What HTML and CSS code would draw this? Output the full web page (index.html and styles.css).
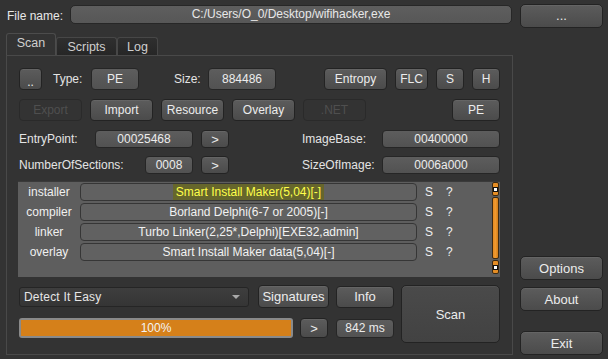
FILE: index.html
```html
<!DOCTYPE html>
<html lang="en">
<head>
    <meta charset="UTF-8">
    <title>Detect It Easy</title>
    <link rel="stylesheet" href="styles.css">
</head>
<body>
    <div id="window">
        <div class="file-bar">
            <span class="file-label">File name:</span>
            <div class="file-input">C:/Users/O_0/Desktop/wifihacker,exe</div>
            <button class="btn side-btn browse-btn">...</button>
        </div>
        <div class="main">
            <div class="left">
                <div class="tabs">
                    <div class="tab active">Scan</div>
                    <div class="tab tab-scripts">Scripts</div>
                    <div class="tab tab-log">Log</div>
                </div>
                <div class="panel">
                    <div class="row row-tall">
                        <button class="btn dots-btn">..</button>
                        <span class="label type-label">Type:</span>
                        <div class="field type-field">PE</div>
                        <span class="label size-label">Size:</span>
                        <div class="field size-field">884486</div>
                        <button class="btn entropy-btn push-right">Entropy</button>
                        <button class="btn flc-btn">FLC</button>
                        <button class="btn small-btn">S</button>
                        <button class="btn small-btn">H</button>
                    </div>
                    <div class="row row-tall">
                        <button class="btn wide-btn" disabled>Export</button>
                        <button class="btn wide-btn">Import</button>
                        <button class="btn wide-btn">Resource</button>
                        <button class="btn wide-btn">Overlay</button>
                        <button class="btn wide-btn" disabled>.NET</button>
                        <button class="btn pe-btn push-right">PE</button>
                    </div>
                    <div class="info-row">
                        <div class="info-left">
                            <span class="label">EntryPoint:</span>
                            <div class="field ep-field">00025468</div>
                            <button class="btn arrow-btn">&gt;</button>
                        </div>
                        <div class="info-right">
                            <span class="label">ImageBase:</span>
                            <div class="field wide-field">00400000</div>
                        </div>
                    </div>
                    <div class="info-row info-row-last">
                        <div class="info-left">
                            <span class="label">NumberOfSections:</span>
                            <div class="field sec-field">0008</div>
                            <button class="btn arrow-btn">&gt;</button>
                        </div>
                        <div class="info-right">
                            <span class="label">SizeOfImage:</span>
                            <div class="field wide-field">0006a000</div>
                        </div>
                    </div>
                    <div class="results">
                        <div class="result-list">
                            <div class="result">
                                <span class="result-type">installer</span>
                                <div class="result-name"><span class="hit">Smart Install Maker(5,04)[-]</span></div>
                                <span class="flag">S</span>
                                <span class="flag flag-q">?</span>
                            </div>
                            <div class="result">
                                <span class="result-type">compiler</span>
                                <div class="result-name">Borland Delphi(6-7 or 2005)[-]</div>
                                <span class="flag">S</span>
                                <span class="flag flag-q">?</span>
                            </div>
                            <div class="result">
                                <span class="result-type">linker</span>
                                <div class="result-name">Turbo Linker(2,25*,Delphi)[EXE32,admin]</div>
                                <span class="flag">S</span>
                                <span class="flag flag-q">?</span>
                            </div>
                            <div class="result">
                                <span class="result-type">overlay</span>
                                <div class="result-name">Smart Install Maker data(5,04)[-]</div>
                                <span class="flag">S</span>
                                <span class="flag flag-q">?</span>
                            </div>
                        </div>
                        <div class="scrollbar">
                            <div class="scroll-arrow"><span></span></div>
                            <div class="scroll-handle"></div>
                            <div class="scroll-arrow"><span></span></div>
                        </div>
                    </div>
                    <div class="bottom">
                        <div class="bottom-left">
                            <div class="bottom-row">
                                <div class="combo">
                                    <span>Detect It Easy</span>
                                    <span class="combo-arrow"></span>
                                </div>
                                <button class="btn sig-btn">Signatures</button>
                                <button class="btn info-btn">Info</button>
                            </div>
                            <div class="bottom-row bottom-row-2">
                                <div class="progress">
                                    <div class="progress-fill" style="width: 100%"></div>
                                    <span class="progress-text">100%</span>
                                </div>
                                <button class="btn arrow-btn arrow-btn-lg">&gt;</button>
                                <div class="field time-field">842 ms</div>
                            </div>
                        </div>
                        <button class="btn scan-btn">Scan</button>
                    </div>
                </div>
            </div>
            <div class="right">
                <button class="btn side-btn">Options</button>
                <button class="btn side-btn about-btn">About</button>
                <button class="btn side-btn exit-btn">Exit</button>
            </div>
        </div>
    </div>
</body>
</html>
```

FILE: styles.css
```css
body {
    margin: 0;
    background: #333333;
    font-family: "Liberation Sans", Arial, sans-serif;
    font-size: 12px;
    color: #e8e8e8;
}

#window {
    width: 608px;
    height: 359px;
    overflow: hidden;
}

.btn {
    font-family: inherit;
    font-size: 12px;
    color: #ececec;
    background: linear-gradient(#5c5c5c, #4b4b4b);
    border: 1px solid #232323;
    border-radius: 4px;
    padding: 0;
    box-sizing: border-box;
    box-shadow: inset 0 1px 0 rgba(255, 255, 255, 0.06);
}

.btn:disabled {
    background: #333333;
    border-color: #2a2a2a;
    color: #4f4f4f;
    box-shadow: none;
}

.field {
    box-sizing: border-box;
    background: linear-gradient(#5d5d5d, #525252);
    border: 1px solid #262626;
    border-radius: 4px;
    display: flex;
    align-items: center;
    justify-content: center;
    color: #ececec;
}

.label {
    color: #e4e4e4;
}

/* file bar */
.file-bar {
    display: flex;
    align-items: center;
    padding: 5px 0 0 7px;
    height: 21px;
}

.file-label {
    width: 63px;
}

.file-input {
    width: 442px;
    height: 19px;
    box-sizing: border-box;
    background: linear-gradient(#5e5e5e, #575757);
    border: 1px solid #272727;
    border-radius: 5px;
    text-align: center;
    line-height: 17px;
    align-self: flex-start;
}

.browse-btn {
    margin-left: 8px;
    height: 21px;
}

.side-btn {
    width: 83px;
    height: 24px;
    border-radius: 5px;
    font-size: 13px;
}

/* main */
.main {
    display: flex;
    margin-top: 7px;
}

.left {
    margin-left: 6px;
    width: 507px;
}

.tabs {
    display: flex;
    align-items: flex-end;
    height: 22px;
}

.tab {
    box-sizing: border-box;
    height: 18px;
    border: 1px solid #474747;
    border-bottom: none;
    border-radius: 3px 3px 0 0;
    background: linear-gradient(#2f2f2f, #262626);
    color: #cfcfcf;
    font-size: 12.5px;
    display: flex;
    align-items: center;
    justify-content: center;
}

.tab.active {
    width: 50px;
    height: 22px;
    background: #333333;
    border-color: #4c4c4c;
    padding-bottom: 3px;
}

.tab-scripts {
    width: 61px;
}

.tab-log {
    width: 41px;
}

.panel {
    box-sizing: border-box;
    height: 300px;
    border: 1px solid #494949;
    padding: 12px 12px 0 12px;
}

.row {
    display: flex;
    align-items: center;
    gap: 8px;
}

.row-tall {
    height: 22px;
    margin-bottom: 9px;
}

.row-tall .btn {
    height: 22px;
}

.push-right {
    margin-left: auto;
}

.dots-btn {
    width: 23px;
    padding-top: 5px;
}

.type-label {
    margin-left: 3px;
    width: 30px;
}

.type-field {
    width: 48px;
    height: 22px;
}

.size-label {
    margin-left: 27px;
    width: 26px;
}

.size-field {
    width: 68px;
    height: 22px;
}

.entropy-btn {
    width: 63px;
}

.flc-btn {
    width: 33px;
}

.small-btn {
    width: 28px;
}

.wide-btn {
    width: 63px;
}

.pe-btn {
    width: 48px;
}

/* info rows */
.info-row {
    display: flex;
    height: 18px;
    margin-bottom: 8px;
}

.info-row-last {
    margin-bottom: 7px;
}

.info-left {
    display: flex;
    align-items: center;
    gap: 8px;
    width: 210px;
}

.info-left .label {
    flex: 1;
}

.info-right {
    display: flex;
    align-items: center;
    margin-left: 73px;
    flex: 1;
}

.info-right .label {
    flex: 1;
}

.ep-field {
    width: 98px;
    height: 18px;
}

.sec-field {
    width: 48px;
    height: 18px;
}

.wide-field {
    width: 118px;
    height: 18px;
}

.arrow-btn {
    width: 28px;
    height: 18px;
    font-size: 13px;
}

/* results */
.results {
    display: flex;
    height: 96px;
    margin-left: -1px;
    background: #5e5e5e;
    border-top: 1px solid #3a3a3a;
    box-sizing: border-box;
    margin-bottom: 8px;
}

.result-list {
    flex: 1;
    padding-top: 1px;
}

.result {
    display: flex;
    align-items: center;
    height: 18px;
    margin-bottom: 2px;
}

.result-type {
    width: 62px;
    text-align: center;
    color: #f0f0f0;
}

.result-name {
    box-sizing: border-box;
    width: 337px;
    height: 18px;
    background: #616161;
    border: 1px solid #363636;
    border-radius: 4px;
    display: flex;
    align-items: center;
    justify-content: center;
    color: #f2f2f2;
}

.hit {
    background: #66662c;
    color: #ffff4a;
    height: 16px;
    line-height: 16px;
    padding: 0 3px;
}

.flag {
    margin-left: 8px;
    width: 8px;
    color: #f0f0f0;
}

.flag-q {
    margin-left: 13px;
}

.scrollbar {
    display: flex;
    flex-direction: column;
    gap: 1px;
    width: 7px;
    margin-right: 1px;
    padding: 0 0 3px;
}

.scroll-arrow {
    height: 14px;
    box-sizing: border-box;
    background: #e58d24;
    border: 1px solid #3b2a14;
    border-radius: 2px;
    display: flex;
    align-items: center;
    justify-content: center;
}

.scroll-arrow span {
    width: 3px;
    height: 3px;
    background: #fff;
    border: 1px solid #111;
}

.scroll-handle {
    flex: 1;
    background: linear-gradient(90deg, #e48b22, #f09a30, #d27c18);
    border: 1px solid #3b2a14;
    border-radius: 2px;
}

/* bottom */
.bottom {
    display: flex;
    height: 58px;
}

.bottom-left {
    width: 375px;
}

.bottom-row {
    display: flex;
    align-items: center;
    height: 23px;
}

.bottom-row-2 {
    height: 20px;
    margin-top: 10px;
}

.combo {
    box-sizing: border-box;
    width: 230px;
    height: 20px;
    background: linear-gradient(#3e3e3e, #353535);
    border: 1px solid #252525;
    border-radius: 3px;
    display: flex;
    align-items: center;
    padding: 0 4px 0 4px;
    color: #e6e6e6;
    font-size: 12px;
    letter-spacing: 0.2px;
}

.combo span:first-child {
    flex: 1;
}

.combo-arrow {
    width: 0;
    height: 0;
    border-left: 4px solid transparent;
    border-right: 4px solid transparent;
    border-top: 4px solid #a8a8a8;
    margin-right: 4px;
}

.sig-btn {
    margin-left: 9px;
    width: 71px;
    height: 23px;
    font-size: 13px;
}

.info-btn {
    margin-left: 7px;
    width: 58px;
    height: 22px;
    font-size: 13px;
}

.progress {
    position: relative;
    box-sizing: border-box;
    width: 274px;
    height: 20px;
    border: 2px solid #8a8a8a;
    border-radius: 3px;
    background: #444;
}

.progress-fill {
    height: 100%;
    background: #d5801a;
}

.progress-text {
    position: absolute;
    left: 0;
    right: 0;
    top: 1px;
    text-align: center;
    color: #f4f4f4;
}

.arrow-btn-lg {
    margin-left: 7px;
    height: 20px;
}

.time-field {
    margin-left: 8px;
    width: 58px;
    height: 19px;
}

.scan-btn {
    margin-left: auto;
    width: 99px;
    height: 58px;
    font-size: 13px;
    border-radius: 5px;
    background: linear-gradient(#4a4a4a, #424242);
}

/* right column */
.right {
    display: flex;
    flex-direction: column;
    justify-content: flex-end;
    margin-left: 7px;
}

.about-btn {
    margin-top: 7px;
}

.exit-btn {
    margin-top: 20px;
}
```
